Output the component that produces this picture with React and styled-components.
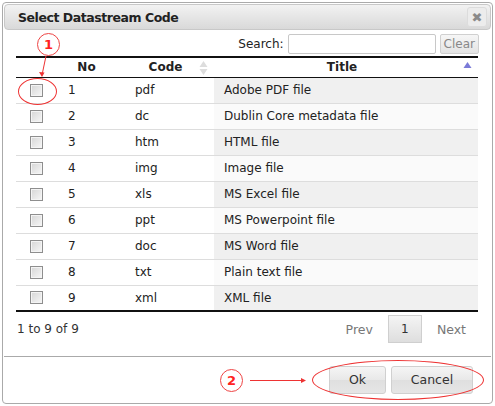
import styled, { createGlobalStyle } from 'styled-components'

const GlobalStyle = createGlobalStyle`
    body {
        margin: 0;
        background: #fff;
        font-family: "DejaVu Sans", Verdana, sans-serif;
        font-size: 12px;
        color: #222;
    }
`

const Dialog = styled.div`
    position: relative;
    box-sizing: border-box;
    margin: 2px;
    width: 491px;
    height: 402px;
    border: 1px solid #aaa;
    border-radius: 4px;
    padding: 1px;
    display: flex;
    flex-direction: column;
`

const TitleBar = styled.div`
    box-sizing: border-box;
    height: 26px;
    border: 1px solid #c8c8c8;
    border-radius: 4px;
    background: linear-gradient(#f2f2f2, #d9d9d9);
    display: flex;
    align-items: center;
    justify-content: space-between;
    padding: 0 3px 0 13px;
`

const Title = styled.span`
    font-weight: bold;
    font-size: 12.5px;
    letter-spacing: -0.45px;
    color: #222;
`

const CloseButton = styled.div`
    box-sizing: border-box;
    width: 20px;
    height: 20px;
    border: 1px solid #dcdcdc;
    border-radius: 3px;
    background: #ececec;
    display: flex;
    align-items: center;
    justify-content: center;
    color: #8a8a8a;
    font-size: 13px;
    font-weight: bold;
`

const Content = styled.div`
    padding: 4px 12px 0 11px;
    flex: 1;
`

const SearchRow = styled.div`
    display: flex;
    justify-content: flex-end;
    align-items: center;
    gap: 4px;
    height: 20px;
    padding-bottom: 2px;
`

const SearchInput = styled.div`
    box-sizing: border-box;
    width: 148px;
    height: 20px;
    border: 1px solid #c8c8c8;
    border-radius: 2px;
`

const SmallButton = styled.div`
    box-sizing: border-box;
    height: 20px;
    padding: 0 3px;
    border: 1px solid #d0d0d0;
    border-radius: 2px;
    background: linear-gradient(#f6f6f6, #e4e4e4);
    color: #888;
    display: flex;
    align-items: center;
`

const Table = styled.table`
    width: 462px;
    margin-left: 1px;
    border-collapse: collapse;
    border-top: 2px solid #111;
    border-bottom: 2px solid #111;
`

const Th = styled.th`
    position: relative;
    height: 20px;
    padding: 0 18px 0 10px;
    font-weight: bold;
    font-size: 12px;
    text-align: center;
    border-bottom: 1px solid #111;
    width: ${p => p.$w || 'auto'};
    box-sizing: border-box;
`

const SortIcon = styled.svg`
    position: absolute;
    right: 6px;
    top: 2px;
`

const Tr = styled.tr`
    height: 26px;
    border-bottom: 1px solid #ddd;
    &:last-child {
        border-bottom: none;
    }
`

const Td = styled.td`
    padding: 0 10px;
    text-align: ${p => (p.$center ? 'center' : 'left')};
    background: ${p => (p.$sorted ? (p.$odd ? '#f0f0f0' : '#fafafa') : '#fff')};
`

const CheckBox = styled.div`
    box-sizing: border-box;
    width: 13px;
    height: 13px;
    margin: 0 auto;
    border: 1px solid #8e8e8e;
    box-shadow: inset 0 0 0 1px #f4f4f4;
    background: linear-gradient(135deg, #d6d6d6, #f7f7f7);
`

const Footer = styled.div`
    display: flex;
    align-items: center;
    justify-content: space-between;
    margin-top: 3px;
    padding-left: 2px;
`

const Info = styled.span`
    color: #333;
`

const Paging = styled.div`
    display: flex;
    align-items: center;
`

const PageLink = styled.span`
    color: #777;
    font-size: 12.5px;
    padding: 0 15px;
    &:last-child {
        padding-right: 13px;
    }
`

const PageCurrent = styled.div`
    box-sizing: border-box;
    width: 34px;
    height: 28px;
    border: 1px solid #cfcfcf;
    background: linear-gradient(#f4f4f4, #dedede);
    display: flex;
    align-items: center;
    justify-content: center;
    color: #333;
`

const ButtonPane = styled.div`
    height: 45px;
    border-top: 1px solid #aaa;
    display: flex;
    align-items: center;
    justify-content: flex-end;
    gap: 5px;
    padding-right: 18px;
`

const DialogButton = styled.div`
    box-sizing: border-box;
    width: ${p => p.$w};
    height: 28px;
    border: 1px solid #d0d0d0;
    border-radius: 3px;
    background: linear-gradient(#f5f5f5, #e8e8e8 50%, #dfdfdf 50%, #e6e6e6);
    color: #333;
    font-size: 12.5px;
    display: flex;
    align-items: center;
    justify-content: center;
`

const Badge = styled.div`
    position: absolute;
    left: ${p => p.$x}px;
    top: ${p => p.$y}px;
    box-sizing: border-box;
    width: 23px;
    height: 23px;
    border: 1px solid #e44;
    border-radius: 50%;
    color: #f22;
    font-weight: bold;
    font-size: 13px;
    display: flex;
    align-items: center;
    justify-content: center;
    background: #fff;
`

const Ellipse = styled.div`
    position: absolute;
    left: ${p => p.$x}px;
    top: ${p => p.$y}px;
    width: ${p => p.$w}px;
    height: ${p => p.$h}px;
    border: 1px solid #e33;
    border-radius: 50%;
    pointer-events: none;
`

const Overlay = styled.svg`
    position: absolute;
    left: 0;
    top: 0;
    pointer-events: none;
`

const rows = [
    ['pdf', 'Adobe PDF file'],
    ['dc', 'Dublin Core metadata file'],
    ['htm', 'HTML file'],
    ['img', 'Image file'],
    ['xls', 'MS Excel file'],
    ['ppt', 'MS Powerpoint file'],
    ['doc', 'MS Word file'],
    ['txt', 'Plain text file'],
    ['xml', 'XML file'],
]

export default function App() {
    return (
        <>
            <GlobalStyle />
            <Dialog>
                <TitleBar>
                    <Title>Select Datastream Code</Title>
                    <CloseButton>✖</CloseButton>
                </TitleBar>
                <Content>
                    <SearchRow>
                        <span>Search:</span>
                        <SearchInput />
                        <SmallButton>Clear</SmallButton>
                    </SearchRow>
                    <Table>
                        <thead>
                            <tr>
                                <Th $w="40px" style={{ padding: 0 }}></Th>
                                <Th $w="69px">No</Th>
                                <Th $w="89px">
                                    Code
                                    <SortIcon width="9" height="16" viewBox="0 0 9 16">
                                        <path d="M4.5 1 L8.5 7 L0.5 7 Z" fill="#ddd" />
                                        <path d="M4.5 15 L8.5 9 L0.5 9 Z" fill="#ddd" />
                                    </SortIcon>
                                </Th>
                                <Th>
                                    Title
                                    <SortIcon width="9" height="9" viewBox="0 0 9 9" style={{ top: 3 }}>
                                        <path d="M4.5 1 L8.5 7 L0.5 7 Z" fill="#7b7bd8" />
                                    </SortIcon>
                                </Th>
                            </tr>
                        </thead>
                        <tbody>
                            {rows.map(([code, title], i) => (
                                <Tr key={code}>
                                    <Td $center style={{ padding: 0 }}>
                                        <CheckBox />
                                    </Td>
                                    <Td style={{ paddingLeft: 12 }}>{i + 1}</Td>
                                    <Td>{code}</Td>
                                    <Td $sorted $odd={i % 2 === 0}>{title}</Td>
                                </Tr>
                            ))}
                        </tbody>
                    </Table>
                    <Footer>
                        <Info>1 to 9 of 9</Info>
                        <Paging>
                            <PageLink>Prev</PageLink>
                            <PageCurrent>1</PageCurrent>
                            <PageLink>Next</PageLink>
                        </Paging>
                    </Footer>
                </Content>
                <ButtonPane>
                    <DialogButton $w="57px">Ok</DialogButton>
                    <DialogButton $w="82px">Cancel</DialogButton>
                </ButtonPane>

                <Badge $x={34} $y={30}>1</Badge>
                <Ellipse $x={15} $y={75} $w={37} $h={25} />
                <Badge $x={217} $y={366}>2</Badge>
                <Ellipse $x={309} $y={357} $w={170} $h={38} />
                <Overlay width="491" height="402" viewBox="0 0 491 402">
                    <path d="M43 53 L39 72" stroke="#e33" strokeWidth="1" fill="none" />
                    <path d="M36 69 L39 74 L41.5 69.5 Z" fill="#e33" />
                    <path d="M247 377.5 L300 377.5" stroke="#e33" strokeWidth="1" fill="none" />
                    <path d="M298 375 L303 377.5 L298 380 Z" fill="#e33" />
                </Overlay>
            </Dialog>
        </>
    )
}
